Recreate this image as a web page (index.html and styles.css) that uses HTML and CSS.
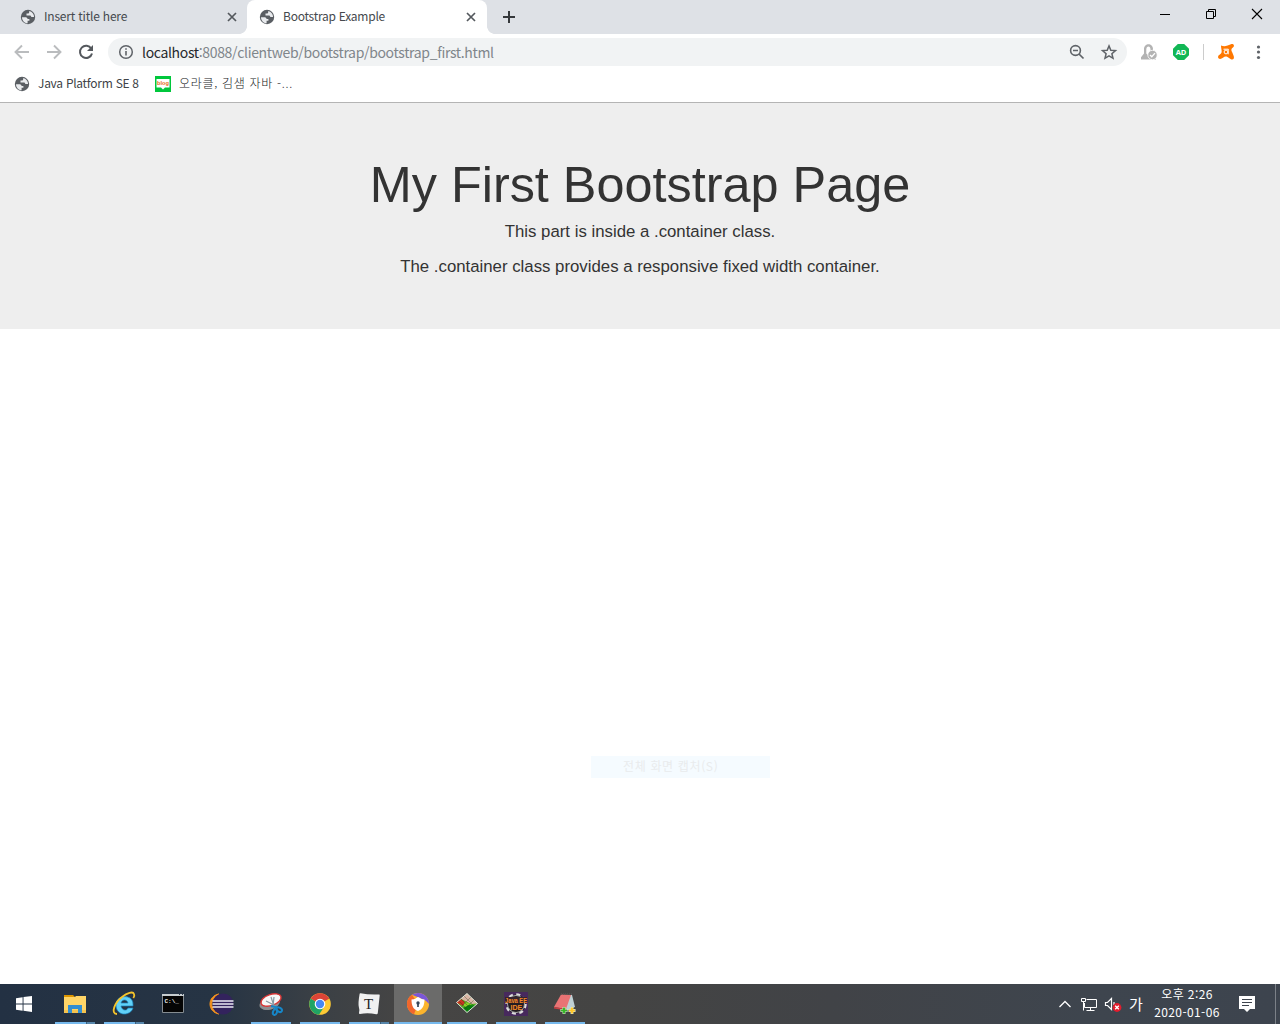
FILE: index.html
```html
<!DOCTYPE html>
<html lang="ko">
<head>
<meta charset="utf-8">
<title>Bootstrap Example</title>
<link rel="stylesheet" href="styles.css">
</head>
<body>
<svg class="defs" width="0" height="0">
  <symbol id="globe" viewBox="0 0 16 16"><circle cx="8" cy="8" r="7.2" fill="#5a5e63"/><path d="M2 8.2h3.2c1.3 0 2.3.6 2.4 1.8h1.8v1.7H7.6v2.6C4.5 14 2 11.600 2 8.200zM9.200 1.900v1.200c0 1-.7 1.500-1.600 1.500H6.500v1.800h3.200c1 0 1.600.7 1.600 1.600h2.800c0-3-2-5.500-4.900-6.100z" fill="#e9ebee"/></symbol>
  <symbol id="close" viewBox="0 0 10 10"><path d="M1 1l8 8M9 1l-8 8" stroke="#54585d" stroke-width="1.7"/></symbol>
</svg>
<header class="browser">
  <div class="tabs">
    <div class="tab idle"><svg class="i16"><use href="#globe"/></svg><span class="t1">Insert title here</span><svg class="i10"><use href="#close"/></svg></div>
    <div class="tab active"><svg class="i16"><use href="#globe"/></svg><span class="t2">Bootstrap Example</span><svg class="i10"><use href="#close"/></svg></div>
    <svg class="plus" viewBox="0 0 12 12"><path d="M6 0v12M0 6h12" stroke="#35383b" stroke-width="2"/></svg>
    <div class="controls">
      <svg viewBox="0 0 10 10"><path d="M0 5.500h10" stroke="#000"/></svg>
      <svg viewBox="0 0 10 10"><path d="M.5 2.500h7v7h-7zM2.500 2.500v-2h7v7h-2" fill="none" stroke="#000"/></svg>
      <svg viewBox="0 0 10 10"><path d="M0 0l10 10M10 0L0 10" stroke="#000" stroke-width="1.100"/></svg>
    </div>
  </div>
  <div class="toolbar">
    <svg class="nav" viewBox="0 0 16 16"><path d="M15 8H2M8 1.500L1.500 8 8 14.500" fill="none" stroke="#babcbe" stroke-width="1.900"/></svg>
    <svg class="nav" viewBox="0 0 16 16"><path d="M1 8h13M8 1.500L14.500 8 8 14.500" fill="none" stroke="#babcbe" stroke-width="1.900"/></svg>
    <svg class="nav" viewBox="0 0 16 16"><path d="M13.300 4.700A6.100 6.100 0 1 0 14 9.500" fill="none" stroke="#54585d" stroke-width="2"/><path d="M15 1v6H9z" fill="#54585d"/></svg>
    <div class="omnibox">
      <svg class="i16" viewBox="0 0 16 16"><circle cx="8" cy="8" r="6.300" fill="none" stroke="#5f6368" stroke-width="1.500"/><path d="M8 7v4.500M8 4.300v1.500" stroke="#5f6368" stroke-width="1.600"/></svg>
      <span class="url"><b>localhost</b>:8088/clientweb/bootstrap/bootstrap_first.html</span>
      <svg class="i16 lens" viewBox="0 0 16 16"><circle cx="6.500" cy="6.500" r="4.900" fill="none" stroke="#5f6368" stroke-width="1.600"/><path d="M4 6.500h5M10 10l4.500 4.500" stroke="#5f6368" stroke-width="1.700"/></svg>
      <svg class="i16" viewBox="0 0 16 16"><path d="M8 1.900l1.800 4.300 4.700.4-3.600 3.100 1.100 4.600L8 11.900l-4 2.400 1.100-4.600-3.600-3.100 4.700-.4z" fill="none" stroke="#5f6368" stroke-width="1.500"/></svg>
    </div>
    <div class="extensions">
      <svg class="i16" viewBox="0 0 16 16"><path d="M0 15.500v-2.300l3-3.700V5c0-6.500 9-6.500 9 0v4l3 4v2.500z" fill="#b3b3b3"/><path d="M5.300 9.500V5.500c0-4 4.200-4 4.200 0V8c-1.500.5-2.500 1.500-2.800 3z" fill="#fff"/><circle cx="11.500" cy="11" r="4.700" fill="#b3b3b3" stroke="#fff" stroke-width=".8"/><path d="M9 11l1.800 1.800 3.200-3.700" stroke="#fff" stroke-width="1.300" fill="none"/></svg>
      <span class="ad">AD</span>
      <span class="divider"></span>
      <svg class="i16" viewBox="0 0 16 16"><path d="M3 1.400c2 .9 4 1 6.600.2L13 .2c2.800-.7 4 2 1.900 3.300-2 1.300-1.900 3-.6 5l1.200 3c1.300 2.800-.2 4.700-2.600 3.800L9.500 13c-2-.9-3-.4-4.500.8-2.300 2-5.500 1.200-4.900-1.300.3-1.300 1.700-1.600 2.900-2.900C4.600 7.500 2.900 4.500 3 1.400z" fill="#ff7800"/><path d="M5.500 5.200h4.800M10.200 5v5.300" stroke="#fff" fill="none"/><circle cx="8" cy="8" r="1.900" stroke="#fff" fill="none"/></svg>
      <svg class="i16 menu" viewBox="0 0 16 16" fill="#5f6368"><circle cx="8.500" cy="3" r="1.600"/><circle cx="8.500" cy="8" r="1.600"/><circle cx="8.500" cy="13.500" r="1.600"/></svg>
    </div>
  </div>
  <div class="bookmarks">
    <svg class="i16"><use href="#globe"/></svg><span class="b1">Java Platform SE 8</span>
    <svg class="i16 blog" viewBox="0 0 16 16"><path d="M0 0h16v16H0z" fill="#00c73c"/><path d="M1.500 3h13v8.500H10l-2 2-2-2H1.500z" fill="#fff"/><text x="2" y="9" textLength="12" lengthAdjust="spacingAndGlyphs">blog</text></svg><span class="b2">오라클, 김샘 자바 -...</span>
  </div>
</header>
<main>
  <section class="jumbotron">
    <h1>My First Bootstrap Page</h1>
    <p>This part is inside a .container class.</p>
    <p>The .container class provides a responsive fixed width container.</p>
  </section>
  <div class="ghost">전체 화면 캡처(S)</div>
</main>
<footer class="taskbar">
  <div class="task start"><svg viewBox="0 0 16 16" fill="#fff"><path d="M0 2.200L6.600 1.200v6.300H0zM7.500 1.100L16 0v7.500H7.500zM0 8.400h6.600v6.300L0 13.800zM7.500 8.400H16V16l-8.500-1.200z"/></svg></div>
  <div class="task open multi"><svg viewBox="0 0 24 24"><path d="M1 5V3h9l2 2z" fill="#dc9500"/><path d="M1 5h11l1-1h10v17H1z" fill="#ffd567"/><path d="M1 18h22v3H1z" fill="#f5c34e"/><path d="M5 21v-8h14v8h-4v-4H9v4z" fill="#328ed2"/></svg></div>
  <div class="task open multi"><svg viewBox="0 0 24 24"><path d="M21 14H9c1 5 6 5 7 2h5c-2 8-17 9-17-3C4 2 21 2 21 12zM9 11h7c-1-4-6-4-7 0z" fill="#61d1f7" stroke="#1783be" stroke-width=".7"/><path d="M5 22C-2 22 3 10 10 5c5-4 11-6 12-3 .6 1.200 0 3-.7 4" fill="none" stroke="#f5c42b" stroke-width="1.800"/></svg></div>
  <div class="task"><svg viewBox="0 0 24 24"><path d="M1.500 2.500h21v18h-21z" fill="#050505" stroke="#858c91"/><path d="M1 2h22v2H1z" fill="#c7cdd0"/><path d="M18 2h1v1h-1zM21 2h1v1h-1z" fill="#345"/><text class="cmd" x="3.500" y="11">C:\_</text></svg></div>
  <div class="task"><svg viewBox="0 0 24 24"><path d="M9 2C-3 4-3 20 9 22-1 17 0 7 9 2z" fill="#f7941e" stroke="#f7941e"/><circle cx="13" cy="12" r="10.500" fill="#33235d"/><path d="M2.500 9h21M2.500 12h21M2.500 15h21" stroke="#eceaf4" stroke-width="1.400"/></svg></div>
  <div class="task open"><svg viewBox="0 0 24 24"><ellipse cx="10.500" cy="11.500" rx="10.500" ry="6" fill="#8b8e91" transform="rotate(-15 11 11)"/><ellipse cx="12" cy="8" rx="10.500" ry="5.500" fill="#f7f7f7" stroke="#d83636" stroke-width="1.400" transform="rotate(-19 12 8)"/><path d="M12 5l4 12M7 9l10 5M15 5l-1 9" stroke="#8799a3" stroke-width="1.200"/><g fill="none" stroke="#1686c8" stroke-width="2"><ellipse cx="16" cy="20" rx="2" ry="3" transform="rotate(20 16 20)"/><ellipse cx="20.500" cy="17.500" rx="3" ry="2" transform="rotate(30 20 17)"/><path d="M12 14l6 1.500"/></g></svg></div>
  <div class="task open"><svg viewBox="0 0 24 24"><circle cx="12" cy="12" r="10.800" fill="#fcc934"/><path d="M12 12L2.700 6.600A10.800 10.800 0 0 0 11 22.700l5.300-8.200z" fill="#20a464"/><path d="M12 12L2.700 6.600A10.800 10.800 0 0 1 21.400 6.600z" fill="#db4437"/><circle cx="12" cy="12" r="5.300" fill="#fff"/><circle cx="12" cy="12" r="4.200" fill="#4688f4"/></svg></div>
  <div class="task open multi"><svg viewBox="0 0 24 24"><path d="M3.500 1.300Q12 3 22 2.500q1 0 .7 1L20.800 21q-.2 1.500-1.500 1.300Q11 20.500 3 22q-1.300 0-1-1.200.8-3-.2-6Q1 11 2.500 2.500q.1-1.300 1-1.200z" fill="#f1f1f1"/><text class="tletter" x="11.500" y="16.500">T</text></svg></div>
  <div class="task open current"><svg viewBox="0 0 24 24"><circle cx="12" cy="12" r="11" fill="#fbb42d"/><path d="M12 12L6 2.800A11 11 0 0 0 8 22.300z" fill="#f1662d"/><path d="M6 2.800A11 11 0 0 1 23 12c-3-4-5-4-9-6z" fill="#7a57d6"/><path d="M5.500 7.500C9 7.500 10 6 12 5c2 1 4 2.500 6.500 2.500 0 6-2 10-6.500 11.500-5-1.500-6.500-6-6.500-11.500z" fill="#fff"/><circle cx="12" cy="11" r="1.700" fill="#36465a"/><path d="M12 11v4" stroke="#36465a" stroke-width="1.700"/></svg></div>
  <div class="task open"><svg viewBox="0 0 24 24"><path d="M12 1.500L22.500 11.500 12 20.500 1.500 10.500z" fill="#4eae20"/><path d="M12 1.500L22.500 11.500l-6 .5L6 7z" fill="#d9b5a4"/><path d="M6 7l4 3-2 4-6.500-3.500z" fill="#c93320"/><path d="M10 10l6 2-3 4-5-2z" fill="#8bcf28"/><path d="M14 13l6 .5-8 7L8 16z" fill="#07800e"/><path d="M9 4l10 10M6 7l10 10M4 9l10 10M16 5L6 15M19 8L9 18" stroke="#243c16" stroke-width=".35"/><path d="M12 1.500L22.500 11.500 12 20.500 1.500 10.500z" fill="none" stroke="#eee" stroke-width=".9"/></svg></div>
  <div class="task open"><svg viewBox="0 0 24 24"><path d="M0 0h24v24H0z" fill="#47295d"/><circle cx="12" cy="12" r="9.500" fill="#1e1c20" stroke="#ddd" stroke-width="2.500" stroke-dasharray="4 3.460"/><circle cx="12" cy="12" r="8.500" fill="#241d22" stroke="#aaa"/><path d="M1 5h22v6H1z" fill="#35242d"/><text class="java" x="1" y="10.500" textLength="22" lengthAdjust="spacingAndGlyphs">Java EE</text><text class="java" x="6.500" y="17.500">IDE</text></svg></div>
  <div class="task open"><svg viewBox="0 0 24 24"><path d="M16 3l3 0 3 12-7 3-4-1z" fill="#bfd0d4"/><path d="M8 2.500l10 .5-5 14-12-2z" fill="#e97374"/><path d="M1 15l12 2v1.500L1 16.500z" fill="#c83f43"/><path d="M8 2h11" stroke="#555" stroke-width="1.600" stroke-dasharray="1 1"/><path d="M11 15v7M7.500 18.500h7M19 15v7M15.500 18.500h7" stroke="#e9f4d9" stroke-width="2.800"/><path d="M11 15.500v6M8 18.500h6" stroke="#39b62a" stroke-width="2.200"/><path d="M19 15.500v6M16 18.500h6" stroke="#ffc62b" stroke-width="2.200"/></svg></div>
  <div class="tray">
    <svg width="12" height="8" viewBox="0 0 12 8"><path d="M.5 7L6 1.500 11.500 7" stroke="#fff" stroke-width="1.300" fill="none"/></svg>
    <svg class="net" width="17" height="15" viewBox="0 0 17 15"><path d="M5.500 2.500h10v8h-12V6M.5 1.500h4v3h-4zM2.500 4.500v9M9.500 10.500v3M5.500 13.500h8" fill="none" stroke="#fff"/></svg>
    <svg class="vol" width="17" height="15" viewBox="0 0 17 15"><path d="M.5 5.500h2l4-4v11l-4-4h-2zM9 5v3" fill="none" stroke="#fff" stroke-width="1.200"/><circle cx="12" cy="10.500" r="4.400" fill="#e31d2e"/><path d="M10.200 8.700l3.600 3.600M13.800 8.700l-3.600 3.600" stroke="#fff" stroke-width="1.300"/></svg>
    <span class="ime">가</span>
    <div class="clock"><span>오후 2:26</span><span>2020-01-06</span></div>
    <svg class="note" width="16" height="16" viewBox="0 0 16 16"><path d="M0 0h16v13h-5l-3 3-3-3H0z" fill="#fff"/><path d="M3 3.500h10M3 6.500h10M3 9.500h7" stroke="#3e444e"/></svg>
  </div>
</footer>
</body>
</html>
```
FILE: styles.css
```css
* { box-sizing: border-box; }
body { margin: 0; width: 1280px; height: 1024px; overflow: hidden; display: flex; flex-direction: column; background: #fff; font-family: "Noto Sans CJK KR", sans-serif; }
svg { display: block; flex: none; overflow: visible; }
.defs { position: absolute; }
span { white-space: nowrap; }
.i16 { width: 16px; height: 16px; }
.i10 { width: 10px; height: 10px; margin-left: auto; }
.browser { height: 103px; border-bottom: 1px solid #b4b4b4; flex: none; }
.tabs { height: 34px; background: #dee1e6; display: flex; font-size: 12px; color: #45494e; }
.tab { height: 34px; display: flex; align-items: center; }
.tab span { margin-left: 8px; line-height: 32px; padding-bottom: 2px; }
.t1 { letter-spacing: -.2px; }
.t2 { letter-spacing: -.25px; }
.idle { width: 247px; padding: 0 10px 0 20px; }
.active { width: 240px; padding: 0 11px 0 12px; background: #fff; border-radius: 8px 8px 0 0; position: relative; }
.active::before, .active::after { content: ""; position: absolute; bottom: 0; width: 8px; height: 8px; }
.active::before { left: -8px; background: radial-gradient(circle at 0 0, #dee1e6 7.600px, #fff 8.200px); }
.active::after { right: -8px; background: radial-gradient(circle at 8px 0, #dee1e6 7.600px, #fff 8.200px); }
.plus { width: 12px; height: 12px; margin: 11px 0 0 16px; }
.controls { display: flex; gap: 36px; margin-left: auto; padding: 9px 18px 0 0; }
.controls svg { width: 10px; height: 10px; }
.toolbar { height: 36px; padding-left: 14px; display: flex; align-items: center; }
.nav { width: 16px; height: 16px; margin-right: 16px; }
.omnibox { width: 1019px; height: 28px; margin-left: -2px; padding: 0 10px; background: #f1f3f4; border-radius: 14px; display: flex; align-items: center; }
.url { margin-left: 8px; font-size: 14px; letter-spacing: -.34px; line-height: 28px; color: #80868b; }
.url b { font-weight: 400; color: #25282c; }
.lens { margin: 0 16px 0 auto; }
.extensions { display: flex; align-items: center; margin-left: 14px; }
.ad { width: 16px; height: 16px; margin-left: 16px; background: #12b755; color: #fff; font: bold 7.500px/16px "Open Sans", sans-serif; text-align: center; clip-path: polygon(30% 0, 70% 0, 100% 30%, 100% 70%, 70% 100%, 30% 100%, 0 70%, 0 30%); }
.divider { width: 1px; height: 16px; background: #ccc; margin: 0 14px; }
.menu { margin-left: 16px; }
.bookmarks { height: 28px; display: flex; align-items: center; padding-left: 14px; font-size: 12px; color: #404347; }
.b1, .b2 { margin-left: 8px; line-height: 24px; padding-bottom: 2px; }
.b1 { width: 101px; letter-spacing: -.28px; }
.b2 { font-weight: 300; color: #17191b; letter-spacing: .7px; }
.blog { margin-left: 16px; }
.blog text { fill: #e66d18; font: bold 6px "Liberation Sans", sans-serif; }
main { height: 881px; }
.jumbotron { height: 226px; padding-top: 54px; background: #eee; color: #333; text-align: center; font-family: "Liberation Sans", sans-serif; }
.jumbotron h1 { margin: 0 0 8px; font-size: 50.400px; line-height: 55px; font-weight: 400; }
.jumbotron p { margin: 0 0 12px; font-size: 16.800px; line-height: 23px; }
.ghost { width: 179px; height: 22px; margin: 427px 0 0 591px; padding-left: 32px; background: #f5fbff; color: #e9ebed; font-size: 12px; letter-spacing: .65px; line-height: 20px; }
.taskbar { height: 40px; display: flex; gap: 1px; background: linear-gradient(90deg, #233143 0, #263444 17%, #3b4045 25%, #464544 32%, #444443 48%, #414347 65%, #3e454e 85%, #3d444e 100%); }
.task { width: 48px; height: 40px; padding: 8px 12px; position: relative; flex: none; }
.task svg { width: 24px; height: 24px; }
.start { margin-right: 2px; padding: 12px 16px; }
.start svg { width: 16px; height: 16px; }
.current { background: #6b6b6a; }
.open::after { content: ""; position: absolute; bottom: 0; left: 4px; width: 40px; height: 2px; background: #76b9ed; }
.multi::after { background: linear-gradient(90deg, #76b9ed 31px, #3d617d 31px, #3d617d 32px, #5786ab 32px); }
.current::after { left: 0; width: 48px; }
.cmd { font: bold 6px "Liberation Mono", monospace; fill: #eee; }
.tletter { font: 15px "Liberation Serif", serif; fill: #222; text-anchor: middle; }
.java { font: bold 7px "Liberation Sans", sans-serif; fill: #f88a25; }
.tray { margin-left: auto; margin-right: 4px; padding-right: 20px; border-right: 1px solid #7c8188; display: flex; align-items: center; color: #fff; }
.net { margin-left: 10px; }
.vol { margin-left: 7px; }
.ime { margin-left: 7px; width: 15px; font-size: 15px; padding-bottom: 2px; }
.clock { width: 68px; margin-left: 9px; padding-bottom: 2px; display: flex; flex-direction: column; align-items: center; font-size: 12px; letter-spacing: .4px; line-height: 18px; }
.note { margin-left: 18px; }
```
